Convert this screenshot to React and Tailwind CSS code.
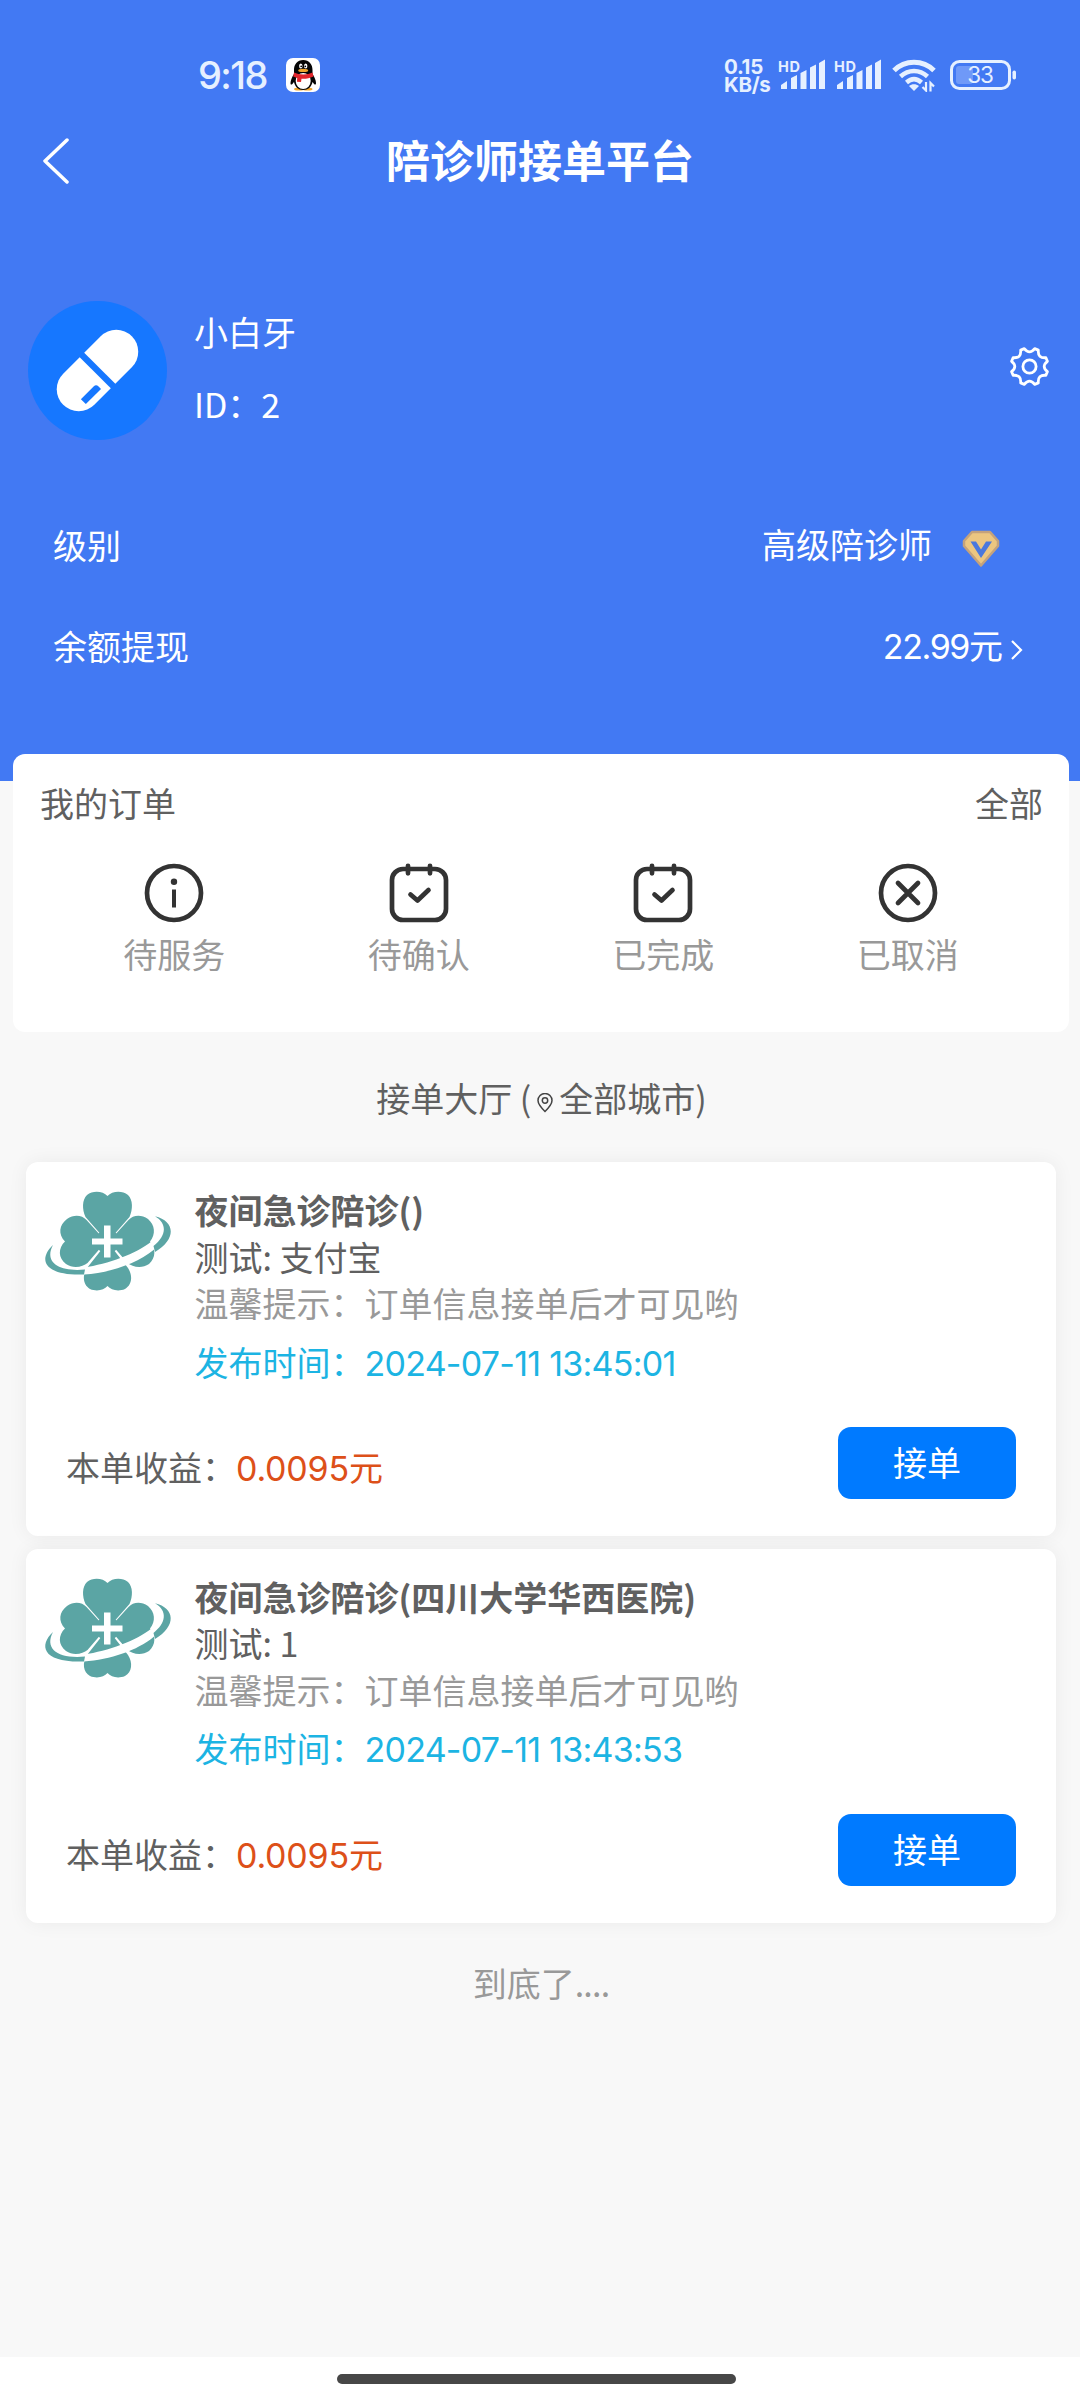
import React from "react";

const orderTabs = [
    { label: "待服务", icon: "info" },
    { label: "待确认", icon: "calendar" },
    { label: "已完成", icon: "calendar" },
    { label: "已取消", icon: "close" },
];

const orders = [
    {
        title: "夜间急诊陪诊()",
        test: "支付宝",
        time: "2024-07-11 13:45:01",
        income: "0.0095",
    },
    {
        title: "夜间急诊陪诊(四川大学华西医院)",
        test: "1",
        time: "2024-07-11 13:43:53",
        income: "0.0095",
    },
];

const Signal = () => (
    <svg
        width="48"
        height="32"
        viewBox="0 0 48 32"
        fill="#e6f0ff"
        className="overflow-visible"
    >
        <text
            x="0"
            y="13.500"
            fontSize="14.500"
            fontWeight="700"
            fontFamily="Inter, sans-serif"
            textLength="22"
        >
            HD
        </text>
        <path d="M3 31v-4l6-4v8zM13 31V20l6-3v14zM22.500 31V15l6-3v19zM32 31V9.500l6-3v24.500zM41 31V5l6-3.500V31z" />
    </svg>
);

const Wifi = () => (
    <svg width="44" height="34" viewBox="0 0 44 34" fill="none" stroke="#e6f0ff">
        <path d="M2 12.500C13 1.500 31 1.500 42 12.500" strokeWidth="5" />
        <path d="M8.500 18.500c8-7.500 19-7.500 27 0" strokeWidth="4.500" />
        <path d="M14.500 24.500c5-4.500 10-4.500 15 0" strokeWidth="4.500" />
        <path d="M17 28c3-2.500 7-2.500 10 0l-5 5z" fill="#e6f0ff" stroke="none" />
        <path d="M34 24v8.500l-3.500-3.500M38.500 33.500V25l3.500 3.500" strokeWidth="2.200" />
    </svg>
);

const Battery = () => (
    <svg width="67" height="30" viewBox="0 0 67 30">
        <rect x="6" y="6" width="17" height="18" rx="3" fill="#6f99f8" />
        <rect
            x="1.500"
            y="1.500"
            width="58"
            height="27"
            rx="8"
            fill="none"
            stroke="#e6f0ff"
            strokeWidth="3"
        />
        <rect x="62.500" y="10.500" width="3.500" height="9" rx="1.700" fill="#e6f0ff" />
        <text
            x="30"
            y="23"
            textAnchor="middle"
            fontSize="22.500"
            fontFamily="Inter, sans-serif"
            letterSpacing="-1.200"
            fill="#e6f0ff"
        >
            33
        </text>
    </svg>
);

const Penguin = () => (
    <svg width="34" height="34" viewBox="0 0 34 34">
        <rect width="34" height="34" rx="7" fill="#fff" />
        <ellipse cx="13" cy="31" rx="5" ry="1.600" fill="#f0a52c" />
        <ellipse cx="21.500" cy="31" rx="5" ry="1.600" fill="#f0a52c" />
        <path
            d="M17.200 2c-6 0-9.200 4.500-9.200 10v4c-2 3-3.500 6.500-3.500 9 0 2.500 1.500 2 3.500-1 1 5 4.500 8 9.200 8s8.300-3 9.300-8c2 3 3.500 3.500 3.500 1 0-2.500-1.500-6-3.500-9v-4c0-5.500-3.300-10-9.300-10z"
            fill="#050505"
        />
        <ellipse cx="17.200" cy="23" rx="7.500" ry="8" fill="#fff" />
        <path d="M8 14.500c5 2.500 13.500 2.500 18.500 0l1 4c-4 2-8 2.500-12 2.300l-.5 3.200-4-.3.200-3.700-4-1.500z" fill="#e2252b" />
        <ellipse cx="14.800" cy="8" rx="1.700" ry="2.500" fill="#fff" />
        <ellipse cx="19.700" cy="8" rx="1.700" ry="2.500" fill="#fff" />
        <circle cx="15.200" cy="8.300" r=".9" />
        <circle cx="19.300" cy="8.300" r=".9" />
        <ellipse cx="17.200" cy="12.400" rx="5" ry="1.600" fill="#f0a52c" />
    </svg>
);

const Avatar = () => (
    <svg width="139" height="139" viewBox="0 0 139 139" className="shrink-0">
        <circle cx="69.500" cy="69.500" r="69.500" fill="#1677ff" />
        <g transform="translate(69.500 69.500) rotate(-45)">
            <path d="M3.200-22h23.300a22 22 0 0 1 0 44H3.200z" fill="#fff" />
            <path d="M-3.200-22h-23.300a22 22 0 0 0 0 44H-3.200z" fill="#fff" />
            <path d="M-32 8.500h18q3.500 0 3.500 3.500v3.500h-21.500z" fill="#1677ff" />
        </g>
    </svg>
);

const Gear = () => (
    <svg
        width="41"
        height="41"
        viewBox="0 0 41 41"
        fill="none"
        stroke="#fff"
        strokeWidth="2.800"
        strokeLinejoin="round"
    >
        <path d="M15.300 2.600Q20.500 9 25.700 2.600L29.300 4.100Q28.600 12.400 36.900 11.700L38.400 15.300Q32 20.500 38.400 25.700L36.900 29.300Q28.600 28.600 29.300 36.900L25.700 38.400Q20.500 32 15.300 38.400L11.700 36.900Q12.400 28.600 4.100 29.300L2.600 25.700Q9 20.500 2.600 15.300L4.100 11.700Q12.400 12.400 11.700 4.100z" />
        <circle cx="20.500" cy="20.500" r="6.600" />
    </svg>
);

const Gem = () => (
    <svg width="38" height="38" viewBox="0 0 38 38">
        <path
            d="M10 2h18l8 9v5L19 35.500 2 16v-5z"
            fill="#ecc680"
            stroke="#c4a27c"
            strokeWidth="2.500"
            strokeLinejoin="round"
        />
        <path d="M8.500 11.500h5.500l5 8 5-8h6L19 28z" fill="#4a78dd" />
    </svg>
);

const TabIcon = ({ type }) => (
    <svg
        width="60"
        height="60"
        viewBox="0 0 60 60"
        fill="none"
        stroke="#333"
        strokeWidth="4.700"
        strokeLinecap="round"
        strokeLinejoin="round"
    >
        {type === "info" && (
            <>
                <circle cx="30" cy="30" r="27" />
                <circle cx="30" cy="18.700" r="3.200" fill="#333" stroke="none" />
                <path d="M30 26.500v18" strokeWidth="4" strokeLinecap="butt" />
            </>
        )}
        {type === "calendar" && (
            <>
                <rect x="3" y="6" width="54" height="51" rx="11" />
                <path d="M19 2.800v7.500M41 2.800v7.500" />
                <path d="M21.500 31.500l7 6L39.500 27" />
            </>
        )}
        {type === "close" && (
            <>
                <circle cx="30" cy="30" r="27" />
                <path d="M20 20l20 20M40 20L20 40" />
            </>
        )}
    </svg>
);

const Clover = () => (
    <svg
        width="126"
        height="100"
        viewBox="0 0 126 100"
        className="shrink-0 overflow-visible"
    >
        <g fill="#5ba5a4">
            <path d="M61.500 50L39.500 25C36 17 36 8 41 3 47-2 57-1 61.500 4 66-1 76-2 82 3 87 8 87 17 83.500 25z" />
            <path d="M60 49.500L40.500 28C36 23 28 22 21 27 13 33 12 42 19 49.500 12 56 12 66 20 72 27 77 37 75 41.500 71z" />
            <path d="M63 49.500L82.500 28C87 23 95 22 102 27 109 33 110 42 104 49.500 110 56 110 66 103 72 96 77 86 75 81.500 71z" />
            <path d="M61.500 50L41 76C36 84 37 93 44 97 51 100 58 98 61.500 94 65 98 72 100 79 97 86 93 87 84 82 76z" />
            <circle cx="61.500" cy="49.500" r="12" />
        </g>
        <path
            d="M38 75.500C62 72 90 62 106 49 117 40 117 31 109 25 122 32 122 46 107.500 58 92 71 64 81 38 82.500z"
            fill="#fff"
        />
        <path
            d="M7 53C-8 67-3 84 38 82.500L39 77.500C12 80-2 70 7 53zM109 24.300C129 29 131 47 109 60L107.500 54C120 44 122 32 109 24.300z"
            fill="#5ba5a4"
        />
        <path d="M58 33.500h6.500V46.500H76.500v6H64.500v13H58v-13H46v-6H58z" fill="#fff" />
    </svg>
);

const Pin = () => (
    <svg
        width="16"
        height="20"
        viewBox="0 0 16 20"
        fill="none"
        stroke="#444"
        strokeWidth="1.500"
        className="mt-[9px] mr-[6px] ml-[6px]"
    >
        <path d="M8 18.500C4 14.500 1 11 1 7.500a7 7 0 0 1 14 0c0 3.500-3 7-7 11z" />
        <circle cx="8" cy="7.500" r="2.700" />
    </svg>
);

const OrderCard = ({ order }) => (
    <div className="h-[374px] rounded-xl bg-white pt-[25px] pl-5 shadow-[0_0_20px_rgba(0,0,0,0.06)]">
        <div className="flex h-[201px]">
            <div className="w-[148.500px] pt-[5px]">
                <Clover />
            </div>
            <div className="leading-[46.500px]">
                <p className="font-bold">{order.title}</p>
                <p>测试: {order.test}</p>
                <p className="text-[#999]">温馨提示：订单信息接单后才可见哟</p>
                <p className="mt-3 text-[#1cb4e3]">
                    发布时间：
                    <span className="font-[Inter] tracking-[-0.750px]">{order.time}</span>
                </p>
            </div>
        </div>
        <div className="mt-[39px] flex items-start justify-between pr-10 pl-5">
            <p className="pt-[17px] leading-[46px]">
                本单收益：
                <span className="text-[#dd5019]">
                    <span className="font-[Inter] tracking-[-0.200px]">{order.income}</span>元
                </span>
            </p>
            <button
                type="button"
                className="h-[72px] w-[178px] rounded-[13px] bg-[#007aff] pb-0.5 text-white"
            >
                接单
            </button>
        </div>
    </div>
);

const App = () => {
    return (
        <div className="flex h-[2400px] w-[1080px] flex-col bg-[#f8f8f8] font-['Noto_Sans_CJK_SC',sans-serif] text-[34px] leading-[46px] whitespace-nowrap text-[#606060]">
            <header className="h-[781px] bg-[#4279f3] text-white">
                <div className="flex h-[112px] items-start justify-between pt-[58px] pr-[63px] pl-[198px] text-[#e6f0ff]">
                    <div className="flex">
                        <span className="w-[88px] font-[Inter] text-[38px] leading-[34px] font-medium tracking-[-1.600px]">
                            9:18
                        </span>
                        <Penguin />
                    </div>
                    <div className="flex">
                        <div className="w-[54px] font-[Inter] text-[20.500px] leading-[18px] font-bold tracking-[-0.300px]">
                            <p>0.15</p>
                            <p>KB/s</p>
                        </div>
                        <div className="mr-2">
                            <Signal />
                        </div>
                        <div className="mr-2.5">
                            <Signal />
                        </div>
                        <div className="mr-3.5">
                            <Wifi />
                        </div>
                        <div className="pt-0.5">
                            <Battery />
                        </div>
                    </div>
                </div>

                <div className="grid h-[98px] grid-cols-[1fr_auto_1fr] items-center pl-[42px]">
                    <svg
                        width="28"
                        height="46"
                        viewBox="0 0 28 46"
                        fill="none"
                        stroke="#fff"
                        strokeWidth="3.500"
                        strokeLinecap="round"
                        strokeLinejoin="round"
                    >
                        <path d="M25 2L3 23l22 21" />
                    </svg>
                    <h1 className="-ml-[42px] pb-1 text-[44px] font-bold">陪诊师接单平台</h1>
                </div>

                <div className="mt-[90px] flex h-[140px] items-center pr-[30px] pl-7">
                    <Avatar />
                    <div className="ml-[27px] flex-1 pb-1">
                        <p>小白牙</p>
                        <p className="mt-[26px]">ID：2</p>
                    </div>
                    <div className="-mt-2">
                        <Gear />
                    </div>
                </div>

                <div className="mt-[82px] flex h-[46px] items-center justify-between pr-20 pl-[53px]">
                    <span>级别</span>
                    <div className="flex items-center">
                        <span className="mr-[30px] pb-0.5">高级陪诊师</span>
                        <div className="pt-2">
                            <Gem />
                        </div>
                    </div>
                </div>
                <div className="mt-[55px] flex h-[46px] items-center justify-between pr-[57px] pl-[53px]">
                    <span>余额提现</span>
                    <div className="flex items-center">
                        <span>
                            <span className="font-[Inter] tracking-[-1.400px]">22.99</span>元
                        </span>
                        <svg
                            width="13"
                            height="22"
                            viewBox="0 0 13 22"
                            fill="none"
                            stroke="#fff"
                            strokeWidth="2.200"
                            className="mt-2 ml-[7px]"
                        >
                            <path d="M2 2l9 9-9 9" />
                        </svg>
                    </div>
                </div>
            </header>

            <section className="-mt-[27px] mr-[11px] ml-[13px] h-[278px] rounded-xl bg-white">
                <div className="flex justify-between pt-[26px] pr-[26px] pl-[27px]">
                    <span>我的订单</span>
                    <span>全部</span>
                </div>
                <div className="mt-[37px] grid grid-cols-4 px-[39px] text-[#999]">
                    {orderTabs.map((tab) => (
                        <div key={tab.label} className="flex flex-col items-center">
                            <TabIcon type={tab.icon} />
                            <span className="mt-2">{tab.label}</span>
                        </div>
                    ))}
                </div>
            </section>

            <div className="mt-[43px] flex items-center justify-center pl-[3px]">
                <span>接单大厅 (</span>
                <Pin />
                <span>全部城市)</span>
            </div>

            <main className="mt-[41px] mr-6 ml-[26px] flex flex-col gap-[12.500px]">
                {orders.map((order) => (
                    <OrderCard key={order.time} order={order} />
                ))}
            </main>

            <p className="mt-[37px] pl-0.5 text-center text-[#999]">
                到底了<span className="tracking-[-0.800px]">....</span>
            </p>

            <footer className="mt-auto flex h-[43px] items-center justify-center bg-white pr-[7px]">
                <div className="h-[10px] w-[399px] rounded-full bg-[#474747]" />
            </footer>
        </div>
    );
};

export default App;
